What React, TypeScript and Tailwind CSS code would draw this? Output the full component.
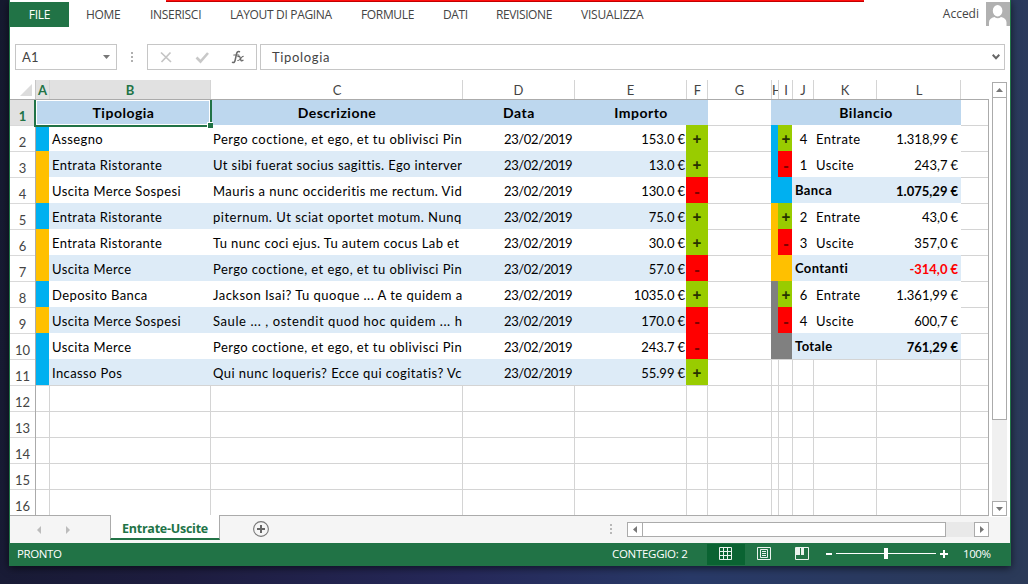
import type { ReactNode } from 'react';

type Entry = {
  account: 'bank' | 'cash';
  type: string;
  text: string;
  spacing?: string;
  amount: string;
  sign: '+' | '-';
};

const entries: Entry[] = [
  { account: 'bank', type: 'Assegno', text: 'Pergo coctione, et ego, et tu oblivisci Pin', amount: '153.0', sign: '+' },
  { account: 'cash', type: 'Entrata Ristorante', text: 'Ut sibi fuerat socius sagittis. Ego interver', spacing: 'tracking-[0.4px]', amount: '13.0', sign: '+' },
  { account: 'cash', type: 'Uscita Merce Sospesi', text: 'Mauris a nunc occideritis me rectum. Vid', spacing: 'tracking-[0.45px]', amount: '130.0', sign: '-' },
  { account: 'bank', type: 'Entrata Ristorante', text: 'piternum. Ut sciat oportet motum. Nunq', spacing: 'tracking-[0.5px]', amount: '75.0', sign: '+' },
  { account: 'cash', type: 'Entrata Ristorante', text: 'Tu nunc coci ejus. Tu autem cocus Lab et', spacing: 'tracking-[0.4px]', amount: '30.0', sign: '+' },
  { account: 'cash', type: 'Uscita Merce', text: 'Pergo coctione, et ego, et tu oblivisci Pin', amount: '57.0', sign: '-' },
  { account: 'bank', type: 'Deposito Banca', text: 'Jackson Isai? Tu quoque ... A te quidem a', spacing: 'tracking-[0.48px]', amount: '1035.0', sign: '+' },
  { account: 'cash', type: 'Uscita Merce Sospesi', text: 'Saule ... , ostendit quod hoc quidem ... h', spacing: 'tracking-[0.58px]', amount: '170.0', sign: '-' },
  { account: 'bank', type: 'Uscita Merce', text: 'Pergo coctione, et ego, et tu oblivisci Pin', amount: '243.7', sign: '-' },
  { account: 'bank', type: 'Incasso Pos', text: 'Qui nunc loqueris? Ecce qui cogitatis? Vc', spacing: 'tracking-[0.45px]', amount: '55.99', sign: '+' },
];

type Balance = {
  color: string;
  inCount: string;
  inTotal: string;
  outCount: string;
  outTotal: string;
  label: string;
  total: string;
  negative?: boolean;
};

const balances: Balance[] = [
  { color: 'bg-[#00b0f0]', inCount: '4', inTotal: '1.318,99', outCount: '1', outTotal: '243,7', label: 'Banca', total: '1.075,29' },
  { color: 'bg-[#ffc000]', inCount: '2', inTotal: '43,0', outCount: '3', outTotal: '357,0', label: 'Contanti', total: '-314,0', negative: true },
  { color: 'bg-[#808080]', inCount: '6', inTotal: '1.361,99', outCount: '4', outTotal: '600,7', label: 'Totale', total: '761,29' },
];

const columns = [
  { name: 'A', width: 'w-[14px] justify-center', active: true },
  { name: 'B', width: 'w-[161px] justify-center', active: true },
  { name: 'C', width: 'w-[252px] justify-center pl-px' },
  { name: 'D', width: 'w-[112px] justify-center' },
  { name: 'E', width: 'w-[112px] justify-center' },
  { name: 'F', width: 'w-[21px] justify-center pl-px' },
  { name: 'G', width: 'w-[64px] justify-center' },
  { name: 'H', width: 'w-[7px] justify-start' },
  { name: 'I', width: 'w-[14px] justify-center pl-px' },
  { name: 'J', width: 'w-[21px] justify-center' },
  { name: 'K', width: 'w-[63px] justify-center' },
  { name: 'L', width: 'w-[84px] justify-center pl-px' },
];

const emptyCells = [
  'w-[161px]', 'w-[252px]', 'w-[112px]', 'w-[112px]', 'w-[21px]', 'w-[64px]',
  'w-[7px]', 'w-[14px]', 'w-[21px]', 'w-[63px]', 'w-[84px]', 'w-[28px]',
];

const ui = "font-['Open_Sans','Liberation_Sans',sans-serif]";

function Sign({ sign, className }: { sign: '+' | '-'; className: string }) {
  const tone = sign === '+' ? 'bg-[#99cc00] text-[#263300]' : 'bg-[#ff0000] text-[#800000]';
  return (
    <div className={`flex h-full shrink-0 items-center justify-center pt-px font-['Open_Sans',sans-serif] text-[15.5px] font-bold ${tone} ${className}`}>
      {sign}
    </div>
  );
}

function Euro({ value }: { value: string }) {
  return (
    <>
      {value}
      <span className="ml-[3px]">€</span>
    </>
  );
}

function EntryRow({ entry, index }: { entry: Entry; index: number }) {
  const band = index % 2 === 1 ? 'bg-[#ddebf7]' : 'bg-white';
  return (
    <div className="flex h-[26px] leading-[26px]">
      <div className={`w-[13px] shrink-0 ${entry.account === 'bank' ? 'bg-[#00b0f0]' : 'bg-[#ffc000]'}`} />
      <div className={`flex w-[637px] shrink-0 pt-px ${band}`}>
        <div className="w-[161px] shrink-0 pl-[3px] tracking-[0.4px] whitespace-nowrap">{entry.type}</div>
        <div className={`w-[252px] shrink-0 overflow-hidden pl-[3px] whitespace-nowrap ${entry.spacing ?? 'tracking-[0.43px]'}`}>
          {entry.text}
        </div>
        <div className="w-[112px] shrink-0 pl-[42px] whitespace-nowrap tracking-[-0.38px]">23/02/2019</div>
        <div className="w-[112px] shrink-0 pr-px text-right">
          <Euro value={entry.amount} />
        </div>
      </div>
      <Sign sign={entry.sign} className="w-[22px]" />
      <div className="w-[63px] shrink-0 border-t border-[#d4d4d4]" />
    </div>
  );
}

function EdgeCell() {
  return <div className="h-[26px] w-[27px] shrink-0 border-t border-[#d4d4d4]" />;
}

function BalanceLine({ sign, count, label, total }: { sign: '+' | '-'; count: string; label: string; total: string }) {
  return (
    <div className="flex h-[26px] leading-[26px]">
      <Sign sign={sign} className="w-[14px] pl-[2px]" />
      <div className="flex w-[169px] bg-white pt-px">
        <div className="w-[21px] pl-[2px] text-center">{count}</div>
        <div className="w-[63px] pl-[3px] tracking-[0.4px]">{label}</div>
        <div className="w-[85px] pr-[3px] text-right">
          <Euro value={total} />
        </div>
      </div>
      <EdgeCell />
    </div>
  );
}

function BalanceBlock({ balance }: { balance: Balance }) {
  return (
    <div className="flex">
      <div className={`w-[7px] shrink-0 ${balance.color}`} />
      <div>
        <BalanceLine sign="+" count={balance.inCount} label="Entrate" total={balance.inTotal} />
        <BalanceLine sign="-" count={balance.outCount} label="Uscite" total={balance.outTotal} />
        <div className="flex h-[26px] leading-[26px] font-bold">
          <div className={`w-[14px] ${balance.color}`} />
          <div className="flex w-[169px] justify-between bg-[#ddebf7] pr-[3px] pl-[3px]">
            <span className="tracking-[0.4px]">{balance.label}</span>
            <span className={`pt-px ${balance.negative ? 'text-[#ff0000]' : ''}`}>
              <Euro value={balance.total} />
            </span>
          </div>
          <EdgeCell />
        </div>
      </div>
    </div>
  );
}

function Tab({ children, className }: { children: ReactNode; className: string }) {
  return <div className={`shrink-0 whitespace-nowrap ${className}`}>{children}</div>;
}

function Ribbon() {
  return (
    <div className={`flex h-[44px] pt-[2px] text-[12px] leading-[25px] text-[#444] ${ui}`}>
      <div className="h-[25px] w-[59px] bg-[#217346] text-center tracking-[-0.3px] text-white">FILE</div>
      <Tab className="ml-[17px] w-[64px] tracking-[-0.3px]">HOME</Tab>
      <Tab className="w-[80px] tracking-[-0.3px]">INSERISCI</Tab>
      <Tab className="w-[131px] tracking-[-0.33px]">LAYOUT DI PAGINA</Tab>
      <Tab className="w-[82px] tracking-[-0.35px]">FORMULE</Tab>
      <Tab className="w-[53px] tracking-[-0.4px]">DATI</Tab>
      <Tab className="w-[85px] tracking-[-0.4px]">REVISIONE</Tab>
      <Tab className="tracking-[-0.2px]">VISUALIZZA</Tab>
      <div className="ml-auto flex">
        <span className="mr-[7px] leading-[24px]">Accedi</span>
        <svg width="24" height="24" viewBox="0 0 24 24" className="bg-[#b1b1b1]">
          <ellipse cx="11.6" cy="8.7" rx="4.800" ry="5.700" fill="#fff" />
          <path d="M3 24v-3.500c0-3 2-4.500 5.500-5.500 2 1.800 4.500 1.800 6.500 0 3.500 1 5.500 2.500 5.500 5.500v3.500z" fill="#fff" />
        </svg>
      </div>
    </div>
  );
}

function FormulaBar() {
  return (
    <div className="flex h-[26px] pl-[5px] text-[13px] leading-[25px] text-[#444]">
      <div className="flex w-[102px] items-center justify-between border border-[#c6c6c6] pr-[6px] pl-[6px]">
        <span className="tracking-[0.3px]">A1</span>
        <svg width="7" height="4" viewBox="0 0 7 4"><path d="M0 0h7L3.500 4z" fill="#777" /></svg>
      </div>
      <svg width="30" height="26" viewBox="0 0 30 26" fill="#b0b0b0">
        <path d="M14 8h2v2h-2zM14 12h2v2h-2zM14 16h2v2h-2z" />
      </svg>
      <div className="w-[110px] border border-[#c6c6c6]">
        <svg width="108" height="24" viewBox="0 0 108 24" fill="none">
          <path d="M13 7.500l10 9.500M22.500 7.500l-9 9.500" stroke="#c4c4c4" strokeWidth="1.700" />
          <path d="M48.500 12.500l4 4L60 8" stroke="#c8c8c8" strokeWidth="2.600" />
          <g stroke="#6a6a6a" strokeLinecap="round">
            <path d="M84.500 17.300c1.600.8 2.300-.5 2.700-2.300l1.300-6c.4-1.900 1.300-3 3-2.300" strokeWidth="1.500" />
            <path d="M85.800 10h5" strokeWidth="1.200" />
            <path d="M90 11.500c1.800-.8 2 .6 2.500 2.500s1 2.400 2.500 1.300" strokeWidth="1.400" />
            <path d="M95.300 11.300c-2 0-3 4.700-5.500 4.200" strokeWidth="1.100" />
          </g>
        </svg>
      </div>
      <div className="ml-[3px] flex w-[745px] items-center justify-between border border-[#c6c6c6] pr-[4px] pl-[11px]">
        <span className="tracking-[0.65px]">Tipologia</span>
        <svg width="8" height="6" viewBox="0 0 8 6"><path d="M.7.8L4 4.200 7.300.8" fill="none" stroke="#666" strokeWidth="2" /></svg>
      </div>
    </div>
  );
}

function ColumnHeaders() {
  return (
    <div className="flex h-[20px] border-b border-[#ababab] pl-px text-[13px] leading-[21px] text-[#444]">
      <div className="flex w-[24px] items-end justify-end pr-[3px] pb-[3px]">
        <svg width="12" height="12" viewBox="0 0 12 12"><path d="M12 0v12H0z" fill="#dcdcdc" /></svg>
      </div>
      <div className="w-px bg-[#c6c6c6]" />
      {columns.map((column) => (
        <div
          key={column.name}
          className={`flex h-[19px] shrink-0 overflow-hidden border-r border-[#d4d4d4] ${column.width} ${
            column.active ? 'bg-[#e1e1e1] font-bold text-[#217346]' : ''
          }`}
        >
          {column.name}
        </div>
      ))}
    </div>
  );
}

function RowNumbers() {
  return (
    <div className="w-[26px] shrink-0 border-r border-[#ababab] text-center text-[13px] text-[#444]">
      <div className="h-[25px] bg-[#e1e1e1] leading-[33px] font-bold text-[#217346]">1</div>
      {Array.from({ length: 15 }, (_, i) => (
        <div key={i} className="h-[26px] border-t border-[#d9d9d9] leading-[32px]">
          {i + 2}
        </div>
      ))}
    </div>
  );
}

function Sheet() {
  return (
    <div className="flex h-[415px] w-[979px] overflow-hidden border-r border-[#ababab]">
      <RowNumbers />
      <div className="w-[952px] text-[13px] text-black">
        <div className="flex h-[25px] text-[14px] leading-[25px] font-bold tracking-[0.5px]">
          <div className="relative flex w-[672px] bg-[#bdd7ee]">
            <div className="w-[174px] pl-px text-center">Tipologia</div>
            <div className="w-[252px] pl-[2px] text-center">Descrizione</div>
            <div className="w-[112px] pl-[2px] text-center">Data</div>
            <div className="w-[112px] pl-[22px] text-center">Importo</div>
            <div className="absolute -top-[2px] -left-[2px] h-[29px] w-[178px] border-2 border-[#217346] shadow-[inset_0_0_0_1px_#fff]" />
            <div className="absolute top-[22px] left-[171px] h-[6px] w-[6px] border-t border-l border-white bg-[#217346]" />
          </div>
          <div className="w-[63px]" />
          <div className="w-[190px] bg-[#bdd7ee] text-center">Bilancio</div>
        </div>
        <div className="flex">
          <div>
            {entries.map((entry, index) => (
              <EntryRow key={index} entry={entry} index={index} />
            ))}
          </div>
          <div>
            {balances.map((balance) => (
              <BalanceBlock key={balance.label} balance={balance} />
            ))}
            <div className="flex h-[26px] border-t border-[#d4d4d4]">
              {emptyCells.slice(6).map((width, i) => (
                <div key={i} className={`shrink-0 border-l border-[#d4d4d4] ${width}`} />
              ))}
            </div>
          </div>
        </div>
        {Array.from({ length: 5 }, (_, row) => (
          <div key={row} className="flex h-[26px] border-t border-[#d4d4d4] pl-[13px]">
            {emptyCells.map((width, i) => (
              <div key={i} className={`shrink-0 border-l border-[#d4d4d4] ${width}`} />
            ))}
          </div>
        ))}
      </div>
    </div>
  );
}

function VerticalScroll() {
  return (
    <div className="relative z-10 ml-[3px] flex h-[434px] w-[15px] flex-col bg-[#f0f0f0]">
      <div className="flex h-[16px] shrink-0 items-center justify-center border border-[#ababab] bg-white">
        <svg width="7" height="4" viewBox="0 0 7 4"><path d="M0 4h7L3.500 0z" fill="#777" /></svg>
      </div>
      <div className="-mt-px h-[323px] border border-[#ababab] bg-white" />
      <div className="mt-auto flex h-[15px] shrink-0 items-center justify-center border border-[#ababab] bg-white">
        <svg width="7" height="4" viewBox="0 0 7 4"><path d="M0 0h7L3.500 4z" fill="#777" /></svg>
      </div>
    </div>
  );
}

function SheetTabs() {
  return (
    <div className="flex h-[28px] bg-[#f5f5f5]">
      <div className="flex h-[28px] w-[100px] items-center border-t border-[#ababab] pl-[26px]">
        <svg width="34" height="8" viewBox="0 0 34 8" fill="#bcbcbc"><path d="M5 0v8L1 4zM30 0v8l4-4z" /></svg>
      </div>
      <div className={`h-[25px] w-[110px] border-x border-b-2 border-x-[#ababab] border-b-[#217346] bg-white text-center text-[12.5px] font-bold tracking-[-0.25px] text-[#217346] leading-[27px] ${ui}`}>
        Entrate-Uscite
      </div>
      <div className="flex w-[769px] border-t border-[#ababab]">
        <svg width="16" height="16" viewBox="0 0 16 16" fill="none" className="mt-[5px] ml-[33px]">
          <circle cx="8" cy="8" r="7.400" stroke="#777" strokeWidth="1.100" />
          <path d="M8 4v8M4 8h8" stroke="#666" strokeWidth="2" />
        </svg>
        <svg width="2" height="10" viewBox="0 0 2 10" fill="#b8b8b8" className="mt-[8px] ml-[341px]">
          <path d="M0 0h2v2H0zM0 4h2v2H0zM0 8h2v2H0z" />
        </svg>
        <div className="mt-[6px] ml-auto flex h-[15px] w-[362px] bg-[#e9e9e9]">
          <div className="flex w-[16px] items-center justify-center border border-[#ababab] bg-white">
            <svg width="4" height="7" viewBox="0 0 4 7"><path d="M4 0v7L0 3.500z" fill="#777" /></svg>
          </div>
          <div className="-ml-px w-[304px] border border-[#ababab] bg-white" />
          <div className="ml-auto flex w-[15px] items-center justify-center border border-[#ababab] bg-white">
            <svg width="4" height="7" viewBox="0 0 4 7"><path d="M0 0v7l4-3.500z" fill="#777" /></svg>
          </div>
        </div>
      </div>
      <div className="h-[2px] w-[21px] bg-white" />
    </div>
  );
}

function StatusBar() {
  return (
    <div className={`-mx-px flex h-[23px] bg-[#217346] text-[11.5px] leading-[22px] text-white ${ui}`}>
      <div className="w-[603px] pl-[8px] tracking-[-0.4px]">PRONTO</div>
      <div className="w-[95px] tracking-[-0.3px] whitespace-nowrap">CONTEGGIO: 2</div>
      <div className="mt-px flex h-[21px] w-[38px] bg-[#0a6332] pt-[3px] pl-[12px]">
        <svg width="13" height="13" viewBox="0 0 13 13" fill="none" stroke="#eaf3ee">
          <path d="M.5.5h12v12H.5zM4.500 0v13M8.500 0v13M0 4.500h13M0 8.500h13" />
        </svg>
      </div>
      <svg width="14" height="13" viewBox="0 0 14 13" fill="none" stroke="#eaf3ee" className="mt-[4px] ml-[12px]">
        <path d="M.5.5h13v12H.5zM3.500 2.500h7v8h-7zM5 4.500h4M5 6.500h4M5 8.500h4" />
      </svg>
      <svg width="14" height="13" viewBox="0 0 14 13" fill="none" className="mt-[4px] ml-[24px]">
        <path d="M.5.5h13v12H.5z" stroke="#eaf3ee" />
        <path d="M1 1h4v7H1zM6 1h3v7H6z" fill="#eaf3ee" />
      </svg>
      <svg width="124" height="13" viewBox="0 0 124 13" fill="#fff" className="mt-[4px] ml-[16px]">
        <path d="M1 6h6v2H1zM11 6h100v1H11zM59 1h4v11h-4zM115 6h8v2h-8zM118 3h2v8h-2z" />
      </svg>
      <div className="ml-[14px] tracking-[-0.4px]">100%</div>
    </div>
  );
}

export default function App() {
  return (
    <div className="h-[584px] w-[1028px] overflow-hidden bg-[linear-gradient(100deg,#161a30_0%,#1e1d40_25%,#26295a_50%,#293a68_70%,#2b3a58_100%)] pl-[9px] font-['Lato','Liberation_Sans',sans-serif]">
      <div className="h-[566px] w-[1002px] border-x border-[#217346] bg-white shadow-[0_2px_8px_rgba(0,0,0,0.6)]">
        <div className="relative">
          <Ribbon />
          <div className="absolute top-0 left-[156px] h-[2px] w-[698px] border-b border-[#c40000] bg-[#ff0d0d]" />
        </div>
        <FormulaBar />
        <div className="flex h-[445px] pt-[10px]">
          <div>
            <ColumnHeaders />
            <Sheet />
          </div>
          <div className="pt-[2px]">
            <VerticalScroll />
          </div>
        </div>
        <SheetTabs />
        <StatusBar />
      </div>
    </div>
  );
}
